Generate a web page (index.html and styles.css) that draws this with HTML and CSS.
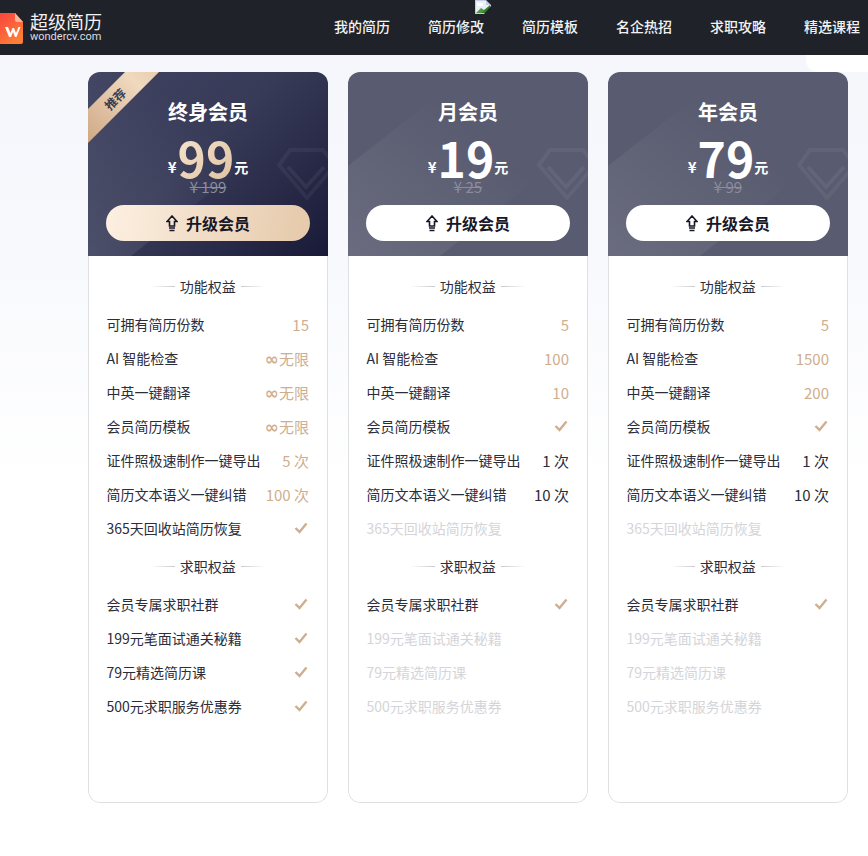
FILE: index.html
```html
<!DOCTYPE html>
<html lang="zh-CN">
<head>
    <meta charset="UTF-8">
    <title>超级简历 - 会员</title>
    <link rel="stylesheet" href="styles.css">
</head>
<body>
    <div class="header">
        <div class="logo">
            <svg class="logo-mark" width="24" height="32" viewBox="0 0 24 32">
                <defs>
                    <linearGradient id="logo-grad" x1="0" y1="0" x2="0.6" y2="1">
                        <stop offset="0" stop-color="#f9433f"/>
                        <stop offset="1" stop-color="#fd7f36"/>
                    </linearGradient>
                </defs>
                <path d="M0 1h15l8 9v20a2 2 0 0 1-2 2H0z" fill="url(#logo-grad)"/>
                <path d="M15 1l8 9h-6a2 2 0 0 1-2-2z" fill="#fcb49c"/>
                <path d="M5 15h3l2.500 6 2-5h1.500l2 5 2.500-6h2l-4 10h-1.500l-2-5-2 5H9z" fill="#fff"/>
            </svg>
            <div class="logo-text">
                <div class="logo-name">超级简历</div>
                <div class="logo-site">wondercv.com</div>
            </div>
        </div>
        <div class="nav">
            <a href="#">我的简历</a>
            <a href="#">简历修改</a>
            <a href="#">简历模板</a>
            <a href="#">名企热招</a>
            <a href="#">求职攻略</a>
            <a href="#">精选课程</a>
        </div>
        <svg class="broken-img" width="16" height="14" viewBox="0 0 16 14">
            <path d="M0 0h11l5 5v9H0z" fill="#c3cfe0"/>
            <path d="M1 1h10v4h4v8H1z" fill="#e8eff9"/>
            <path d="M1 13l5-5 3 2 6-4v7z" fill="#4f9a3f"/>
            <path d="M6 13l9-8v8z" fill="#3a7d2d"/>
            <path d="M2 3h6v3H2z" fill="#fff"/>
            <path d="M9 14l7-8v8z" fill="#202229"/>
        </svg>
    </div>
    <div class="corner"></div>

    <div class="plans">
        <div class="card">
            <div class="card-top best">
                <div class="stripe"></div>
                <div class="ribbon">推荐</div>
                <svg class="gem" width="62" height="54" viewBox="0 0 62 54">
                    <path d="M14 3h33l12 15-28 33L3 18z" fill="none" stroke="#fff" stroke-opacity=".05" stroke-width="4" stroke-linejoin="round"/>
                    <path d="M12 20l18 20 18-20" fill="none" stroke="#fff" stroke-opacity=".06" stroke-width="4"/>
                </svg>
                <h2>终身会员</h2>
                <div class="price"><span class="yen">¥</span><span class="num gold">99</span><span class="unit">元</span></div>
                <div class="old-price">¥ 199</div>
                <a class="buy gold-btn" href="#">
                    <svg width="12" height="17" viewBox="0 0 12 17"><path d="M6 1L1 6.500h2.500V11h5V6.500H11zM3 13h6M3.500 15.500h5" fill="none" stroke="#16182a" stroke-width="1.600"/></svg>
                    升级会员
                </a>
            </div>
            <div class="card-body">
                <div class="section-title">功能权益</div>
                <div class="row"><span>可拥有简历份数</span><span class="val">15</span></div>
                <div class="row"><span>AI 智能检查</span><span class="val"><b class="inf">∞</b>无限</span></div>
                <div class="row"><span>中英一键翻译</span><span class="val"><b class="inf">∞</b>无限</span></div>
                <div class="row"><span>会员简历模板</span><span class="val"><b class="inf">∞</b>无限</span></div>
                <div class="row"><span>证件照极速制作一键导出</span><span class="val">5 次</span></div>
                <div class="row"><span>简历文本语义一键纠错</span><span class="val">100 次</span></div>
                <div class="row"><span>365天回收站简历恢复</span><svg class="check" width="14" height="12" viewBox="0 0 14 12"><path d="M1.500 6l4 4 7-8.500"/></svg></div>
                <div class="section-title">求职权益</div>
                <div class="row"><span>会员专属求职社群</span><svg class="check" width="14" height="12" viewBox="0 0 14 12"><path d="M1.500 6l4 4 7-8.500"/></svg></div>
                <div class="row"><span>199元笔面试通关秘籍</span><svg class="check" width="14" height="12" viewBox="0 0 14 12"><path d="M1.500 6l4 4 7-8.500"/></svg></div>
                <div class="row"><span>79元精选简历课</span><svg class="check" width="14" height="12" viewBox="0 0 14 12"><path d="M1.500 6l4 4 7-8.500"/></svg></div>
                <div class="row"><span>500元求职服务优惠券</span><svg class="check" width="14" height="12" viewBox="0 0 14 12"><path d="M1.500 6l4 4 7-8.500"/></svg></div>
            </div>
        </div>

        <div class="card">
            <div class="card-top">
                <div class="stripe"></div>
                <svg class="gem" width="62" height="54" viewBox="0 0 62 54">
                    <path d="M14 3h33l12 15-28 33L3 18z" fill="none" stroke="#fff" stroke-opacity=".05" stroke-width="4" stroke-linejoin="round"/>
                    <path d="M12 20l18 20 18-20" fill="none" stroke="#fff" stroke-opacity=".06" stroke-width="4"/>
                </svg>
                <h2>月会员</h2>
                <div class="price"><span class="yen">¥</span><span class="num">19</span><span class="unit">元</span></div>
                <div class="old-price">¥ 25</div>
                <a class="buy" href="#">
                    <svg width="12" height="17" viewBox="0 0 12 17"><path d="M6 1L1 6.500h2.500V11h5V6.500H11zM3 13h6M3.500 15.500h5" fill="none" stroke="#16182a" stroke-width="1.600"/></svg>
                    升级会员
                </a>
            </div>
            <div class="card-body">
                <div class="section-title">功能权益</div>
                <div class="row"><span>可拥有简历份数</span><span class="val">5</span></div>
                <div class="row"><span>AI 智能检查</span><span class="val">100</span></div>
                <div class="row"><span>中英一键翻译</span><span class="val">10</span></div>
                <div class="row"><span>会员简历模板</span><svg class="check" width="14" height="12" viewBox="0 0 14 12"><path d="M1.500 6l4 4 7-8.500"/></svg></div>
                <div class="row"><span>证件照极速制作一键导出</span><span class="val dark">1 次</span></div>
                <div class="row"><span>简历文本语义一键纠错</span><span class="val dark">10 次</span></div>
                <div class="row off"><span>365天回收站简历恢复</span></div>
                <div class="section-title">求职权益</div>
                <div class="row"><span>会员专属求职社群</span><svg class="check" width="14" height="12" viewBox="0 0 14 12"><path d="M1.500 6l4 4 7-8.500"/></svg></div>
                <div class="row off"><span>199元笔面试通关秘籍</span></div>
                <div class="row off"><span>79元精选简历课</span></div>
                <div class="row off"><span>500元求职服务优惠券</span></div>
            </div>
        </div>

        <div class="card">
            <div class="card-top">
                <div class="stripe"></div>
                <svg class="gem" width="62" height="54" viewBox="0 0 62 54">
                    <path d="M14 3h33l12 15-28 33L3 18z" fill="none" stroke="#fff" stroke-opacity=".05" stroke-width="4" stroke-linejoin="round"/>
                    <path d="M12 20l18 20 18-20" fill="none" stroke="#fff" stroke-opacity=".06" stroke-width="4"/>
                </svg>
                <h2>年会员</h2>
                <div class="price"><span class="yen">¥</span><span class="num">79</span><span class="unit">元</span></div>
                <div class="old-price">¥ 99</div>
                <a class="buy" href="#">
                    <svg width="12" height="17" viewBox="0 0 12 17"><path d="M6 1L1 6.500h2.500V11h5V6.500H11zM3 13h6M3.500 15.500h5" fill="none" stroke="#16182a" stroke-width="1.600"/></svg>
                    升级会员
                </a>
            </div>
            <div class="card-body">
                <div class="section-title">功能权益</div>
                <div class="row"><span>可拥有简历份数</span><span class="val">5</span></div>
                <div class="row"><span>AI 智能检查</span><span class="val">1500</span></div>
                <div class="row"><span>中英一键翻译</span><span class="val">200</span></div>
                <div class="row"><span>会员简历模板</span><svg class="check" width="14" height="12" viewBox="0 0 14 12"><path d="M1.500 6l4 4 7-8.500"/></svg></div>
                <div class="row"><span>证件照极速制作一键导出</span><span class="val dark">1 次</span></div>
                <div class="row"><span>简历文本语义一键纠错</span><span class="val dark">10 次</span></div>
                <div class="row off"><span>365天回收站简历恢复</span></div>
                <div class="section-title">求职权益</div>
                <div class="row"><span>会员专属求职社群</span><svg class="check" width="14" height="12" viewBox="0 0 14 12"><path d="M1.500 6l4 4 7-8.500"/></svg></div>
                <div class="row off"><span>199元笔面试通关秘籍</span></div>
                <div class="row off"><span>79元精选简历课</span></div>
                <div class="row off"><span>500元求职服务优惠券</span></div>
            </div>
        </div>
    </div>
</body>
</html>
```

FILE: styles.css
```css
html, body {
    height: 856px;
    overflow: hidden;
}
body {
    margin: 0;
    font-family: "Noto Sans CJK SC", "Noto Sans", sans-serif;
    color: #2b2d3a;
    background: linear-gradient(180deg, #f5f6fb 0, #f8f9fd 260px, #ffffff 480px);
    position: relative;
}
.header {
    height: 55px;
    background: #202229;
    display: flex;
    justify-content: space-between;
    align-items: center;
    padding-right: 8px;
    position: relative;
}
.logo {
    display: flex;
    align-items: center;
    gap: 6px;
}
.logo-text {
    padding-bottom: 3px;
}
.logo-name {
    font-size: 18px;
    line-height: 22px;
    color: #f2f2f2;
}
.logo-site {
    margin-top: -1px;
    font-family: "Roboto", sans-serif;
    font-size: 11px;
    line-height: 12px;
    color: #dcdde0;
}
.nav {
    display: flex;
    gap: 38px;
    padding-bottom: 4px;
}
.nav a {
    color: #f2f2f2;
    font-size: 14px;
    font-weight: 500;
    text-decoration: none;
}
.broken-img {
    position: absolute;
    left: 475px;
    top: 0;
}
.corner {
    position: absolute;
    top: 55px;
    right: 0;
    width: 62px;
    height: 17px;
    background: #fff;
    border-bottom-left-radius: 12px;
}
.plans {
    display: flex;
    gap: 20px;
    padding: 17px 0 0 88px;
}
.card {
    width: 240px;
    height: 731px;
    border-radius: 12px;
    overflow: hidden;
    background: #fff;
}
.card-top {
    height: 184px;
    box-sizing: border-box;
    padding-top: 26px;
    background: #595b70;
    color: #fff;
    text-align: center;
    position: relative;
    overflow: hidden;
}
.card-top.best {
    background: linear-gradient(135deg, #3f4260 0, #383b58 45%, #191a38 100%);
}
/* lighter diagonal band across the header */
.stripe {
    position: absolute;
    inset: 0;
    background: linear-gradient(40deg, rgba(255, 255, 255, 0.1) 0, rgba(255, 255, 255, 0) 60%);
    clip-path: polygon(0 94px, 120px 0, 240px 0, 240px 66px, 92px 184px, 0 184px);
}
.best .stripe {
    clip-path: polygon(0 0, 240px 0, 240px 26px, 43px 184px, 0 184px);
}
.ribbon {
    position: absolute;
    left: -38px;
    top: 15px;
    width: 130px;
    height: 24px;
    line-height: 24px;
    font-size: 12px;
    font-weight: 700;
    color: #3a3c52;
    transform: rotate(-45deg);
    background: linear-gradient(90deg, #c89f7a, #f0d9bf 70%, #e6c6a2);
}
.gem {
    position: absolute;
    left: 188px;
    top: 75px;
}
.card-top h2 {
    position: relative;
    margin: 0;
    font-size: 20px;
    line-height: 28px;
    font-weight: 700;
}
.price {
    position: relative;
    display: flex;
    justify-content: center;
    align-items: flex-end;
    height: 44px;
    margin-top: 9px;
    line-height: 44px;
}
.yen, .unit {
    font-size: 14px;
    line-height: 16px;
    margin-bottom: 4px;
    font-weight: 700;
}
.yen {
    font-size: 15px;
    margin-right: 1px;
}
.num {
    font-size: 48px;
    font-weight: 700;
}
.num.gold {
    background: linear-gradient(135deg, #f5e3cd, #e0c3a3);
    -webkit-background-clip: text;
    background-clip: text;
    color: transparent;
}
.old-price {
    position: relative;
    margin-top: 1px;
    font-size: 15px;
    line-height: 14px;
    color: #8b8d9b;
    text-decoration: line-through;
}
.buy {
    position: relative;
    display: flex;
    justify-content: center;
    align-items: center;
    gap: 8px;
    width: 204px;
    height: 36px;
    margin: 11px auto 0;
    border-radius: 18px;
    background: #fff;
    color: #16182a;
    font-size: 16px;
    font-weight: 700;
    line-height: 34px;
    text-decoration: none;
}
.buy.gold-btn {
    background: linear-gradient(100deg, #fdf0e2, #e5c9aa);
}
.card-body {
    height: 547px;
    box-sizing: border-box;
    padding: 19px 18px 0 17.500px;
    border: 1px solid #dfe0e4;
    border-top: none;
    border-radius: 0 0 12px 12px;
}
.section-title {
    display: flex;
    justify-content: center;
    align-items: center;
    gap: 5px;
    height: 22px;
    font-size: 14px;
    margin-bottom: 10px;
}
.section-title::before, .section-title::after {
    content: "";
    width: 25px;
    height: 1px;
}
.section-title::before {
    background: linear-gradient(90deg, rgba(200, 200, 205, 0), #c8c8cd);
}
.section-title::after {
    background: linear-gradient(90deg, #c8c8cd, rgba(200, 200, 205, 0));
}
.row {
    display: flex;
    justify-content: space-between;
    align-items: center;
    height: 34px;
    font-size: 14px;
}
.row + .section-title {
    margin-top: 10px;
}
.off {
    color: #d4d5d9;
}
.val {
    color: #cfae8f;
    font-size: 15px;
}
.val.dark {
    color: #2b2d3a;
}
.inf {
    font-family: "DejaVu Sans", sans-serif;
    font-size: 17px;
    line-height: 1;
}
.check {
    margin-right: 1px;
}
.check path {
    fill: none;
    stroke: #cfae8f;
    stroke-width: 2.400;
}
```
